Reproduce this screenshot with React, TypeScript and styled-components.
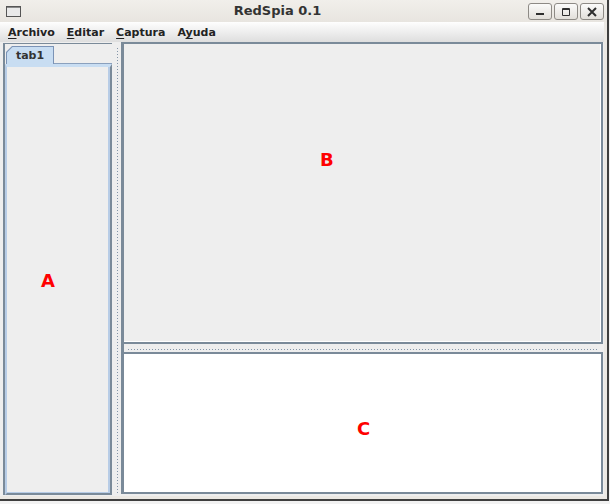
import React from "react";
import styled, { createGlobalStyle } from "styled-components";

const GlobalStyle = createGlobalStyle`
  html, body { margin: 0; padding: 0; background: #f2f2f2; }
  body { width: 610px; height: 504px; overflow: hidden; font-family: "DejaVu Sans", "Noto Sans", sans-serif; }
  * { box-sizing: border-box; }
`;

const BORDER = "#7a8a99";
const TAB_BLUE = "#c8ddf2";
const TAB_LINE = "#b7cce6";

const Window = styled.div`
  width: 609px;
  height: 501px;
  border-right: 2px solid #3e3e3e;
  border-bottom: 2px solid #3e3e3e;
  background: #ebe8e3;
  display: flex;
  flex-direction: column;
`;

const TitleBar = styled.div`
  height: 22px;
  flex: none;
  display: flex;
  align-items: center;
  padding: 0 3px 0 6px;
  background: linear-gradient(#f1efeb, #e8e5e0);
`;

const Title = styled.div`
  flex: 1;
  text-align: center;
  padding-left: 6px;
  font: bold 13px/22px "DejaVu Sans", sans-serif;
  color: #333;
`;

const WinButtons = styled.div`
  display: flex;
  gap: 2px;
`;

const WinButton = styled.div`
  width: 24px;
  height: 17px;
  border: 1px solid #8d8a85;
  border-radius: 3px;
  background: linear-gradient(#fbfbfa, #e2dfda);
  display: flex;
`;

const Body = styled.div`
  flex: 1;
  display: flex;
  flex-direction: column;
  padding: 0 3px 3px 0;
  min-height: 0;
`;

const MenuBar = styled.div`
  height: 20px;
  flex: none;
  display: flex;
  padding-left: 2px;
  background: linear-gradient(#fefefe, #dedede);
`;

const MenuItem = styled.div`
  padding: 0 6px;
  font: bold 11px/21px "DejaVu Sans", sans-serif;
  color: #222;
  u { text-underline-offset: 2px; }
`;

const Content = styled.div`
  flex: 1;
  display: flex;
  background: #eeeeee;
  padding-left: 3px;
  min-height: 0;
`;

const LeftPanel = styled.div`
  width: 109px;
  flex: none;
  margin: 1px 0;
  border-top: 1px solid ${BORDER};
  border-left: 2px solid ${BORDER};
  padding-top: 2px;
  display: flex;
  flex-direction: column;
`;

const TabStrip = styled.div`
  height: 18px;
  flex: none;
  display: flex;
  padding-left: 1px;
`;

const TabOuter = styled.div`
  width: 48px;
  height: 18px;
  background: #7b93b6;
  clip-path: polygon(6px 0, 100% 0, 100% 100%, 0 100%, 0 6px);
  padding: 1px 1px 0 1px;
  display: flex;
`;

const TabInner = styled.div`
  flex: 1;
  background: ${TAB_BLUE};
  clip-path: polygon(5.5px 0, 100% 0, 100% 100%, 0 100%, 0 5.5px);
  font: bold 11px/18px "DejaVu Sans", sans-serif;
  color: #333;
  text-align: center;
`;

const TabFiller = styled.div`
  flex: 1;
  border-bottom: 1px solid #8aa0bd;
  height: 18px;
`;

const TabContent = styled.div`
  flex: 1;
  border-left: 2px solid ${TAB_LINE};
  border-top: 3px solid ${TAB_BLUE};
  border-right: 2px solid ${BORDER};
  border-bottom: 2px solid ${BORDER};
  box-shadow: inset -2px -1px 0 ${TAB_LINE};
  background: #eeeeee;
`;

const VDivider = styled.div`
  width: 9px;
  flex: none;
  display: flex;
  padding: 6px 0 3px 5px;
`;

const Dots = styled.div<{ $vertical?: boolean }>`
  ${(p) =>
    p.$vertical
      ? `width: 1px; background: repeating-linear-gradient(to bottom, #8495a8 0 1px, transparent 1px 3px);`
      : `height: 1px; flex: 1; background: repeating-linear-gradient(to right, #8495a8 0 1px, transparent 1px 3px);`}
`;

const RightColumn = styled.div`
  flex: 1;
  display: flex;
  flex-direction: column;
  padding: 0 1px 2px 0;
`;

const Pane = styled.div<{ $white?: boolean; $grow?: boolean }>`
  ${(p) => (p.$grow ? "flex: 1;" : "height: 302px; flex: none;")}
  border: 2px solid ${BORDER};
  border-left-width: 3px;
  background: ${(p) => (p.$white ? "#ffffff" : "#eeeeee")};
  box-shadow: ${(p) => (p.$white ? "none" : "inset -1px -1px 0 #ffffff")};
`;

const HDivider = styled.div`
  height: 8px;
  flex: none;
  display: flex;
  align-items: flex-start;
  border-left: 3px solid ${BORDER};
  padding: 5px 4px 0 4px;
`;

const Label = styled.span<{ $x: number; $y: number }>`
  display: block;
  width: max-content;
  margin-left: ${(p) => p.$x}px;
  margin-top: ${(p) => p.$y}px;
  font: bold 18px/18px "DejaVu Sans", sans-serif;
  color: #ff0000;
`;

const WindowIcon = () => (
  <svg width="15" height="11" viewBox="0 0 15 11">
    <rect x="0.5" y="0.5" width="14" height="10" fill="#e9e9e9" stroke="#555" />
    <line x1="1" y1="1.5" x2="14" y2="1.5" stroke="#8a8a8a" />
  </svg>
);

const BtnIcon: React.FC<{ kind: "min" | "max" | "close" }> = ({ kind }) => (
  <svg width="22" height="15" viewBox="0 0 22 15">
    {kind === "min" && <rect x="7" y="9" width="8" height="2" fill="#2e2e2e" />}
    {kind === "max" && (
      <path d="M7.5 4.5 H14.5 V11.5 H7.5 Z M7 5.5 H15" fill="none" stroke="#2e2e2e" strokeWidth="1" />
    )}
    {kind === "close" && (
      <path d="M7 4 L15 12 M15 4 L7 12" stroke="#2e2e2e" strokeWidth="2" fill="none" />
    )}
  </svg>
);

export default function App() {
  return (
    <>
      <GlobalStyle />
      <Window>
        <TitleBar>
          <WindowIcon />
          <Title>RedSpia 0.1</Title>
          <WinButtons>
            <WinButton>
              <BtnIcon kind="min" />
            </WinButton>
            <WinButton>
              <BtnIcon kind="max" />
            </WinButton>
            <WinButton>
              <BtnIcon kind="close" />
            </WinButton>
          </WinButtons>
        </TitleBar>
        <Body>
          <MenuBar>
            <MenuItem>
              <u>A</u>rchivo
            </MenuItem>
            <MenuItem>
              <u>E</u>ditar
            </MenuItem>
            <MenuItem>
              <u>C</u>aptura
            </MenuItem>
            <MenuItem>
              A<u>y</u>uda
            </MenuItem>
          </MenuBar>
          <Content>
            <LeftPanel>
              <TabStrip>
                <TabOuter>
                  <TabInner>tab1</TabInner>
                </TabOuter>
                <TabFiller />
              </TabStrip>
              <TabContent>
                <Label $x={34} $y={205}>A</Label>
              </TabContent>
            </LeftPanel>
            <VDivider>
              <Dots $vertical />
            </VDivider>
            <RightColumn>
              <Pane>
                <Label $x={196} $y={107}>B</Label>
              </Pane>
              <HDivider>
                <Dots />
              </HDivider>
              <Pane $white $grow>
                <Label $x={233} $y={66}>C</Label>
              </Pane>
            </RightColumn>
          </Content>
        </Body>
      </Window>
    </>
  );
}
